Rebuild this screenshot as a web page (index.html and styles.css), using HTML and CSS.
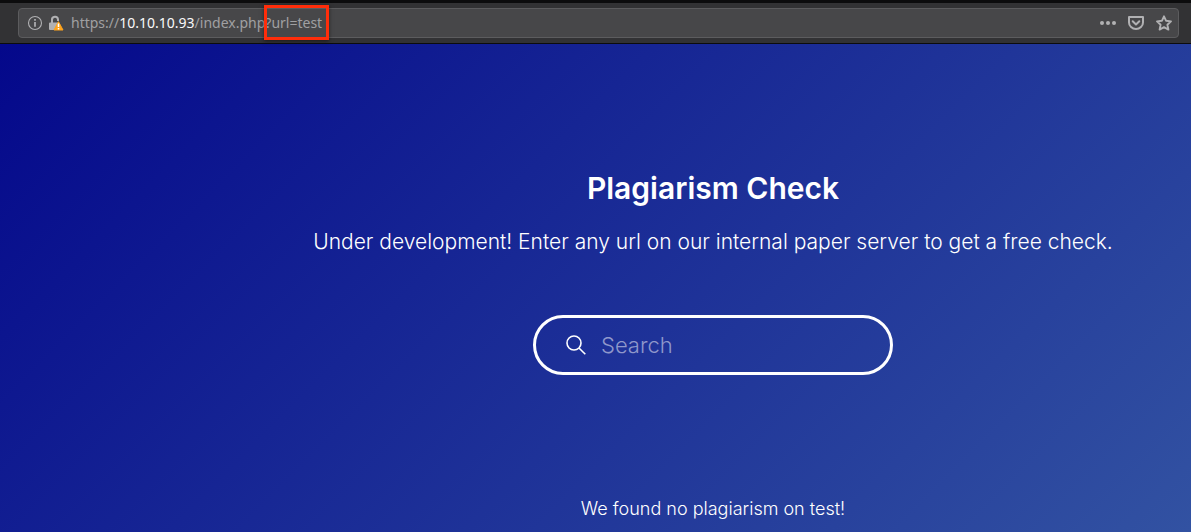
FILE: index.html
```html
<!DOCTYPE html>
<html lang="en">
<head>
<meta charset="utf-8">
<title>Plagiarism Check</title>
<link rel="stylesheet" href="styles.css">
</head>
<body>
<header class="toolbar">
  <div class="address-bar">
    <button class="icon-button" type="button" aria-label="Site information">
      <svg width="16" height="16" viewBox="0 0 16 16" fill="none" stroke="#b1b1b3"><circle cx="8" cy="8" r="6.5" stroke-width="1.1"/><path d="M8 7v4.7M8 4.1v1.7" stroke-width="1.7"/></svg>
    </button>
    <button class="icon-button lock" type="button" aria-label="Connection is not secure">
      <svg width="16" height="16" viewBox="0 0 16 16"><path d="M4 8.5V5a3 3 0 0 1 6-.5V6" fill="none" stroke="#b1b1b3" stroke-width="2"/><path d="M2 7.5h8L6.5 15H2a1 1 0 0 1-1-1V8.500a1 1 0 0 1 1-1z" fill="#b1b1b3"/><path d="M10.500 6.700L15 15H6z" fill="#ffa41c" stroke="#ffa41c" stroke-width="1" stroke-linejoin="round"/><path d="M10.500 8.600v3.300M10.500 13v1.500" stroke="#fff" stroke-width="1.500"/></svg>
    </button>
    <div class="url" role="textbox" aria-label="Address">https://<span class="host">10.10.10.93</span>/index.php?<span class="query">url=test</span></div>
    <div class="actions">
      <button class="icon-button" type="button" aria-label="Page actions">
        <svg width="18" height="16" viewBox="0 0 18 16" fill="#b1b1b3"><circle cx="3" cy="8" r="2"/><circle cx="9" cy="8" r="2"/><circle cx="15" cy="8" r="2"/></svg>
      </button>
      <button class="icon-button" type="button" aria-label="Save to Pocket">
        <svg width="18" height="16" viewBox="0 0 18 16" fill="none" stroke="#b1b1b3" stroke-width="2" stroke-linecap="round" stroke-linejoin="round"><path d="M2 2h14v5.500a7 6.500 0 0 1-14 0z"/><path d="M5.700 6.300L9 9.500l3.300-3.200"/></svg>
      </button>
      <button class="icon-button" type="button" aria-label="Bookmark this page">
        <svg width="18" height="16" viewBox="0 0 18 16" fill="none" stroke="#b1b1b3" stroke-width="1.900" stroke-linejoin="round"><path d="M9 1.300l2.100 4.500 4.900.6-3.600 3.300 1 4.900L9 12.200l-4.400 2.400 1-4.900L2 6.400l4.900-.6z"/></svg>
      </button>
    </div>
  </div>
</header>
<main class="page">
  <h1 class="title">Plagiarism Check</h1>
  <p class="intro">Under development! Enter any url on our internal paper server to get a free check.</p>
  <form class="search">
    <svg width="20" height="20" viewBox="0 0 20 20" fill="none" stroke="#fff" stroke-width="1.600" aria-hidden="true"><circle cx="8" cy="8" r="7"/><path d="M13 13l6.300 6.300"/></svg>
    <input class="search-input" type="text" name="url" placeholder="Search" aria-label="Search">
  </form>
  <p class="result">We found no plagiarism on test!</p>
</main>
</body>
</html>
```
FILE: styles.css
```css
* {
  box-sizing: border-box;
}

body {
  display: flex;
  flex-direction: column;
  min-height: 100vh;
  margin: 0;
  font-family: Inter, "Liberation Sans", sans-serif;
}

.toolbar {
  padding: 5px 12px 5px 18px;
  background: #323234;
  border-top: 3px solid #0c0c0d;
  border-bottom: 1px solid #0c0c0d;
}

.address-bar {
  display: flex;
  align-items: center;
  height: 30px;
  padding: 0 5px 0 8px;
  background: #474749;
  border: 1px solid #5c5c5e;
  border-radius: 4px;
}

.icon-button {
  display: flex;
  padding: 0;
  background: none;
  border: 0;
}

.lock {
  margin: 0 7px 0 5px;
}

.url {
  flex: 1;
  color: #a0a0a2;
  font: 14px/20px "Noto Sans", sans-serif;
  white-space: nowrap;
}

.host {
  color: #f9f9fa;
}

.query {
  position: relative;
}

.query::after {
  position: absolute;
  inset: -8px -7px;
  border: 3px solid #ff2d0a;
  box-shadow: 0 1px 4px #0008;
  content: "";
}

.actions {
  display: flex;
  gap: 10px;
}

.page {
  display: flex;
  flex: 1;
  flex-direction: column;
  align-items: center;
  padding: 124px 0 0 235px;
  color: #fff;
  background: linear-gradient(135deg, #04088b, #3252a2);
}

.title {
  margin: 0;
  font-size: 30px;
  font-weight: 600;
  line-height: 40px;
}

.intro {
  margin: 18px 0 0;
  font-size: 21px;
  font-weight: 300;
  line-height: 32px;
  white-space: nowrap;
}

.search {
  display: flex;
  align-items: center;
  gap: 15px;
  width: 360px;
  height: 60px;
  margin: 57px 0 0;
  padding: 0 30px;
  border: 3px solid #fff;
  border-radius: 30px;
}

.search-input {
  flex: 1;
  min-width: 0;
  padding: 0;
  color: #fff;
  background: none;
  border: 0;
  outline: 0;
  font: 300 22px/28px Inter, "Liberation Sans", sans-serif;
}

.search-input::placeholder {
  color: #8f98cb;
}

.result {
  margin: 122px 0 0;
  font-size: 18px;
  font-weight: 300;
  line-height: 24px;
}
```
